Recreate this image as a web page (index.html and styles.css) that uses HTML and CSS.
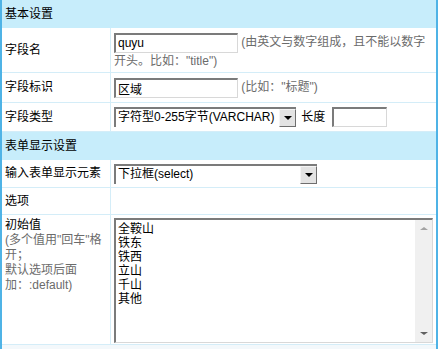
FILE: index.html
```html
<!DOCTYPE html>
<html lang="zh-CN">

<head>
    <meta charset="UTF-8">
    <meta name="viewport" content="width=device-width, initial-scale=1.0">
    <title>字段设置</title>
    <link rel="stylesheet" href="styles.css">
</head>

<body>
    <table class="form-table">
        <tr class="group">
            <th colspan="2">基本设置</th>
        </tr>
        <tr class="row-name">
            <td class="label">字段名</td>
            <td class="field">
                <input class="txt" type="text" value="quyu"> <span class="tip">(由英文与数字组成，且不能以数字<br>开头。比如："title")</span>
            </td>
        </tr>
        <tr class="row-title">
            <td class="label">字段标识</td>
            <td class="field">
                <input class="txt" type="text" value="区域"> <span class="tip">(比如："标题")</span>
            </td>
        </tr>
        <tr class="row-type">
            <td class="label">字段类型</td>
            <td class="field">
                <span class="select select-type">
                    <span class="select-text">字符型0-255字节(VARCHAR)</span>
                    <span class="select-btn"><i></i></span>
                </span>
                <span class="len-label">长度</span>
                <input class="txt txt-len" type="text">
            </td>
        </tr>
        <tr class="group">
            <th colspan="2">表单显示设置</th>
        </tr>
        <tr class="row-elem">
            <td class="label">输入表单显示元素</td>
            <td class="field">
                <span class="select select-elem">
                    <span class="select-text">下拉框(select)</span>
                    <span class="select-btn"><i></i></span>
                </span>
            </td>
        </tr>
        <tr class="row-opt">
            <td class="label">选项</td>
            <td class="field"></td>
        </tr>
        <tr class="row-default">
            <td class="label">
                初始值<br>
                <span class="tip">(多个值用"回车"格<br>开；<br>默认选项后面<br>加：:default)</span>
            </td>
            <td class="field">
                <div class="area-box">
                    <textarea class="area">全鞍山
铁东
铁西
立山
千山
其他</textarea>
                    <div class="scroll">
                        <span class="arrow up"></span>
                        <span class="arrow down"></span>
                    </div>
                </div>
            </td>
        </tr>
        <tr class="foot">
            <td colspan="2"></td>
        </tr>
    </table>
</body>

</html>
```

FILE: styles.css
```css
* {
    padding: 0;
    margin: 0;
}

body {
    background-color: #fff;
    color: #000;
    font: 12px/15px "Liberation Sans", "Noto Sans CJK SC", sans-serif;
}

.form-table {
    width: 438px;
    border-spacing: 0;
    border-left: 2px solid #4fb3e6;
    border-right: 2px solid #4fb3e6;
}

.form-table td,
.form-table th {
    box-sizing: border-box;
    vertical-align: middle;
    text-align: left;
    font-weight: normal;
}

.form-table .group th {
    height: 28px;
    padding-left: 3px;
    background-color: #c7edfb;
}

.form-table td {
    border-bottom: 1px solid #d4edf8;
}

.form-table .label {
    width: 109px;
    padding: 0 3px;
    border-right: 1px solid #d4edf8;
}

.form-table .field {
    padding: 0 3px;
}

.form-table .row-name td {
    height: 45px;
    padding-top: 1px;
}

.form-table .row-title td {
    height: 30px;
}

.form-table .row-type td {
    height: 29px;
}

.form-table .row-elem td {
    height: 28px;
}

.form-table .row-opt td {
    height: 27px;
}

.form-table .row-default td {
    height: 130px;
    vertical-align: top;
    padding-top: 3px;
}

.form-table .row-default .label {
    padding-top: 3px;
}

.form-table .foot td {
    height: 6px;
    border-bottom: none;
    background-color: #f3f8fb;
}

.tip {
    color: #6b6b6b;
    white-space: nowrap;
}

.row-name .tip {
    line-height: 16px;
}

.txt {
    box-sizing: border-box;
    width: 124px;
    height: 20px;
    padding: 0 2px;
    border-style: solid;
    border-width: 2px 1px 1px 2px;
    border-color: #7b7b7b #d8d8d8 #d8d8d8 #7b7b7b;
    outline: none;
    font: 12px "Liberation Sans", "Noto Sans CJK SC", sans-serif;
    color: #000;
    vertical-align: middle;
}

.txt-len {
    width: 55px;
}

.select {
    box-sizing: border-box;
    display: inline-flex;
    align-items: stretch;
    height: 20px;
    border-style: solid;
    border-width: 2px 0 0 2px;
    border-color: #7b7b7b;
    background-color: #fff;
    vertical-align: middle;
}

.select-type {
    width: 182px;
}

.select-elem {
    width: 203px;
}

.select-text {
    flex: 1;
    padding-left: 2px;
    line-height: 17px;
    white-space: nowrap;
    overflow: hidden;
}

.select-btn {
    box-sizing: border-box;
    display: flex;
    align-items: center;
    justify-content: center;
    width: 17px;
    border-style: solid;
    border-width: 1px;
    border-color: #f4f4f4 #6e6e6e #6e6e6e #f4f4f4;
    background-color: #e3e3e3;
}

.select-btn i {
    width: 0;
    height: 0;
    border-top: 4px solid #000;
    border-left: 4px solid transparent;
    border-right: 4px solid transparent;
}

.len-label {
    margin: 0 3px 0 2px;
    vertical-align: middle;
}

.area-box {
    box-sizing: border-box;
    display: flex;
    width: 319px;
    height: 125px;
    border-style: solid;
    border-width: 2px 1px 1px 2px;
    border-color: #7b7b7b #d8d8d8 #d8d8d8 #7b7b7b;
}

.area {
    flex: 1;
    padding: 1px 2px;
    border: none;
    outline: none;
    resize: none;
    overflow: hidden;
    font: 12px/14px "Noto Sans CJK SC", sans-serif;
    color: #000;
}

.scroll {
    display: flex;
    flex-direction: column;
    justify-content: space-between;
    width: 17px;
    background-color: #f0f0f0;
}

.arrow {
    display: flex;
    align-items: center;
    justify-content: center;
    height: 17px;
}

.arrow::before {
    content: "";
    width: 0;
    height: 0;
    border-left: 4px solid transparent;
    border-right: 4px solid transparent;
}

.arrow.up::before {
    border-bottom: 3px solid #a3a3a3;
}

.arrow.down::before {
    border-top: 3px solid #606060;
}
```
